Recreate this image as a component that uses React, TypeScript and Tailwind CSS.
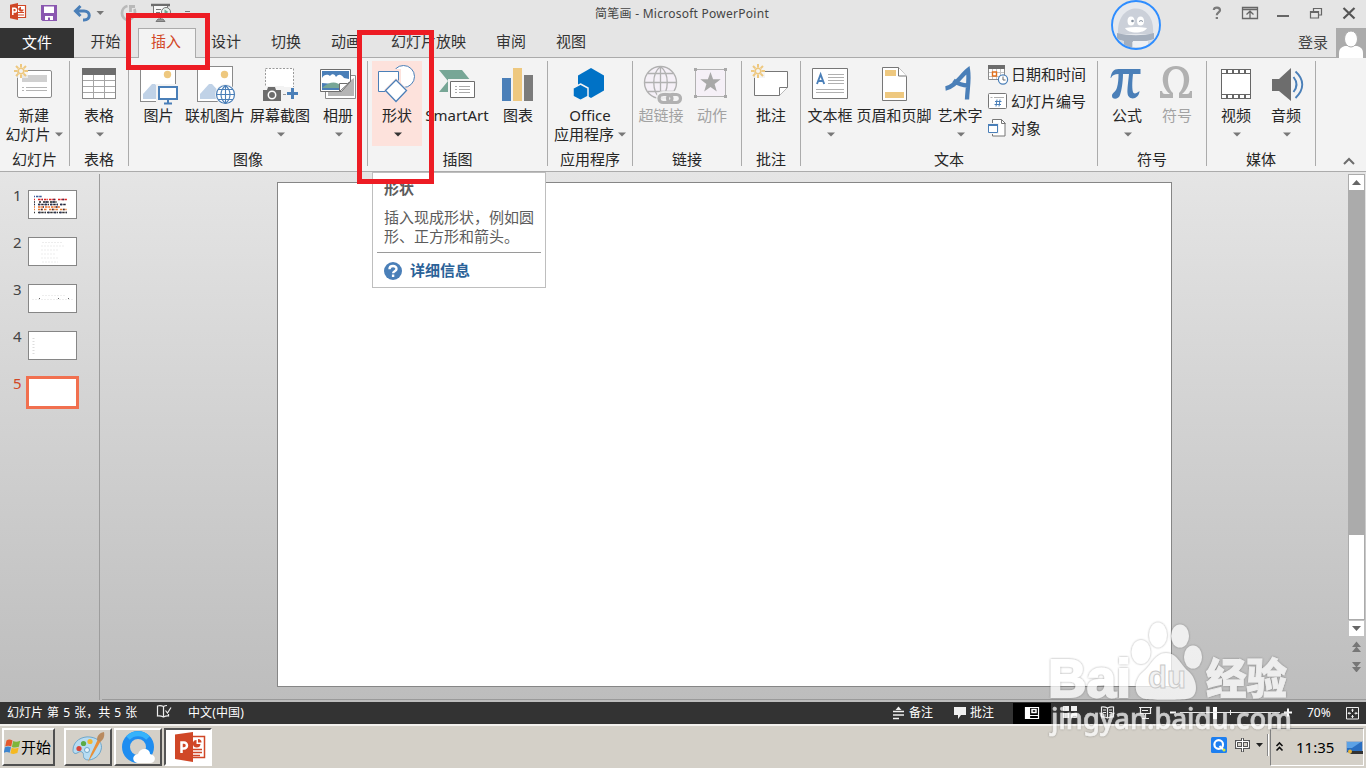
import React from "react";

/* ---------- shared pieces ---------- */

function Art({ x, w, children }: { x: number; w: number; children: React.ReactNode }) {
  return (
    <svg width={w} height={44} viewBox={`${x} 62 ${w} 44`} className="block shrink-0">
      {children}
    </svg>
  );
}

function Caret({ className = "" }: { className?: string }) {
  return (
    <svg width="8" height="5" viewBox="0 0 8 5" className={className}>
      <path d="M0 0.5h8L4 4.5z" fill="currentColor" />
    </svg>
  );
}

type ButtonProps = {
  x: number;
  w: number;
  label: string;
  width: string;
  second?: string;
  caret?: boolean;
  disabled?: boolean;
  active?: boolean;
  children: React.ReactNode;
};

function RibbonButton({ x, w, label, width, second, caret, disabled, active, children }: ButtonProps) {
  return (
    <div
      className={`${width} flex h-[85px] shrink-0 flex-col items-center ${active ? "bg-[#fde2dc]" : ""} ${
        disabled ? "text-[#a2a2a2]" : "text-[#262626]"
      }`}
    >
      <div className="pt-px">
        <Art x={x} w={w}>
          {children}
        </Art>
      </div>
      <div className="h-[19px] text-[15px] leading-[19px]">{label}</div>
      <div className={`flex h-[19px] items-center gap-[4px] text-[15px] leading-[19px] ${second ? "" : "pl-[2px]"}`}>
        {second && <span>{second}</span>}
        {(caret || second) && <Caret className={active ? "text-[#333]" : "text-[#777]"} />}
      </div>
    </div>
  );
}

function Group({ width, name, pad = "", children }: { width: string; name: string; pad?: string; children: React.ReactNode }) {
  return (
    <div className={`${width} flex h-[105px] shrink-0 flex-col border-r border-[#ababab]`}>
      <div className={`flex h-[85px] ${pad}`}>{children}</div>
      <div className="mt-[3px] text-center text-[15px] leading-[20px] text-[#262626]">{name}</div>
    </div>
  );
}

function Spark({ x, y }: { x: number; y: number }) {
  return (
    <g stroke="#eec87f" strokeWidth="2" fill="none">
      <circle cx={x} cy={y} r="2.8" strokeWidth="1.6" fill="#f3f3f3" />
      <path
        d={`M${x} ${y - 7}v3.4M${x} ${y + 3.6}v3.4M${x - 7} ${y}h3.4M${x + 3.6} ${y}h3.4M${x - 5} ${y - 5}l2.3 2.3M${x + 5} ${
          y - 5
        }l-2.3 2.3M${x - 5} ${y + 5}l2.3 -2.3M${x + 5} ${y + 5}l-2.3 -2.3`}
      />
    </g>
  );
}

function Photo({ x }: { x: number }) {
  return (
    <g>
      <rect x={x + 0.5} y="66.5" width="35" height="35" fill="#fff" stroke="#8a8a8a" />
      <circle cx={x + 27.5} cy="74.5" r="3.7" fill="#eec87f" />
      <path d={`M${x + 3} 99v-5l9-10h3l12 13v2z`} fill="#c0d2e7" />
    </g>
  );
}

/* ---------- title bar and tabs ---------- */

function TitleBar() {
  return (
    <div className="flex h-[28px] items-start">
      <svg width="200" height="28" viewBox="0 0 200 28" className="shrink-0">
        <path d="M17 5.500h8.500v12h-8.500" fill="#fff" stroke="#d04727" strokeWidth="1.200" />
        <path d="M18 12.500h6M18 15h6M18 9h2" stroke="#d04727" strokeWidth="1.200" />
        <path d="M21 6.800a2.500 2.500 0 1 0 2.800 2.800h-2.800z" fill="#d04727" />
        <path d="M10 4.800l8-1.800v17l-8-1.800z" fill="#d04727" />
        <path d="M12.800 15V8.300h1.800a1.800 1.800 0 0 1 0 3.700h-1.800" stroke="#fff" strokeWidth="1.500" fill="none" />
        <path d="M41 5h16v16h-14.500l-1.500-1.500z" fill="#8a57b0" />
        <path d="M44 6.500h10v6.500h-10z" fill="#fff" />
        <path d="M45 16h8v4h-3v-2.500h-2v2.500h-3z" fill="#fff" />
        <path d="M80.500 6L75.500 11l5 5M75.500 11h8.500c7 0 7 9 0 9h-1" fill="none" stroke="#4a7fb8" strokeWidth="3" />
        <path d="M96.500 11h7.500l-3.750 4z" fill="#777" />
        <path d="M127.500 6a7 7 0 0 0-5.500 7 6.500 6.500 0 0 0 7 7M129 6.500h6M130.500 6v6M134.500 9c1.500 4-.5 9-5.500 11" fill="none" stroke="#b9b9b9" strokeWidth="2.800" />
        <path d="M151 5h19" stroke="#6d6d6d" strokeWidth="2.500" />
        <path d="M153.500 6v10.500h14V6" fill="#f7f7f7" stroke="#777" />
        <path d="M156 9.500h5M156 12.500h4M160.500 16v3M156 21.500h9l-2-2.500h-5z" stroke="#777" fill="#999" />
        <circle cx="166" cy="12" r="4.500" fill="#e8f1ed" stroke="#777" />
        <path d="M164.500 9.500l4 2.500-4 2.500z" fill="#6fa58f" />
        <path d="M185 11.500h5" stroke="#777" />
      </svg>
      <div className="w-[964px] text-center text-[12px] leading-[27px] tracking-[0.260px] text-[#444]">
        简笔画 - Microsoft PowerPoint
      </div>
      <svg width="202" height="28" viewBox="1164 0 202 28" className="shrink-0">
        <path d="M1213.800 10c.3-3.300 6.200-3.300 6.200.2 0 2.300-3.200 2.100-3.200 5M1215.700 18h2.300" fill="none" stroke="#7a7a7a" strokeWidth="2.200" />
        <path d="M1242.500 7.500h15v11h-15zM1242.500 9.500h15M1250 18v-6M1246.500 14.500l3.500-3.300 3.500 3.300" fill="none" stroke="#666" strokeWidth="1.300" />
        <path d="M1277 16h12" stroke="#666" strokeWidth="2" />
        <path d="M1313.500 12V8.500h8v6.500h-3M1310.500 11.500h8v6.500h-8zM1310.500 12.500h8M1313.500 8.500h8" fill="none" stroke="#666" strokeWidth="1.200" />
        <path d="M1343.500 8l11 10.500M1354.500 8l-11 10.500" stroke="#555" strokeWidth="2.200" />
      </svg>
    </div>
  );
}

const tabs: { name: string; cls: string }[] = [
  { name: "开始", cls: "w-[64px] pr-px" },
  { name: "插入", cls: "w-[58px] border border-b-0 border-[#ababab] bg-[#f3f3f3] pr-[2px] text-[#d24726]" },
  { name: "设计", cls: "w-[60px]" },
  { name: "切换", cls: "w-[60px]" },
  { name: "动画", cls: "w-[60px]" },
  { name: "幻灯片放映", cls: "w-[105px]" },
  { name: "审阅", cls: "w-[60px]" },
  { name: "视图", cls: "w-[60px]" },
];

function TabRow() {
  return (
    <div className="flex h-[30px] text-[15px] leading-[26px] text-[#333]">
      <div className="w-[74px] bg-[#333] text-center leading-[28px] text-white">文件</div>
      {tabs.map((t) => (
        <div
          key={t.name}
          className={`${t.cls} text-center ${t.name === "插入" ? "leading-[25px]" : "border-b border-[#ababab]"}`}
        >
          {t.name}
        </div>
      ))}
      <div className="flex flex-1 justify-end border-b border-[#ababab] pr-[8px] leading-[29px] text-[#444]">登录</div>
      <svg width="30" height="30" viewBox="0 0 30 30" className="shrink-0">
        <rect width="30" height="30" fill="#ababab" />
        <path d="M3 30v-5c0-5 4-7 7-7h10c3 0 7 2 7 7v5z" fill="#fff" />
        <ellipse cx="15" cy="11" rx="6.500" ry="8" fill="#fff" stroke="#ababab" />
      </svg>
    </div>
  );
}

/* ---------- ribbon ---------- */

function SmallRow({ label, children }: { label: string; children: React.ReactNode }) {
  return (
    <div className="flex h-[27px] items-center gap-[2px] text-[15px] leading-[27px] text-[#262626]">
      <svg width="21" height="22" viewBox="0 0 21 22" className="shrink-0">
        {children}
      </svg>
      {label}
    </div>
  );
}

function Ribbon() {
  return (
    <div className="flex h-[114px] border-b border-[#ababab] bg-[#f3f3f3] pt-[3px]">
      <Group width="w-[70px]" name="幻灯片">
        <RibbonButton x={0} w={68} width="w-[68px]" label="新建" second="幻灯片">
          <rect x="17.500" y="70.500" width="34" height="27" rx="1.500" fill="#fff" stroke="#8a8a8a" />
          <path d="M22 75h25v7h-25z" fill="#d0d0d0" />
          <path d="M26 87.500h21M26 90.500h21M22 87.500h2M22 90.500h2" stroke="#b5b5b5" />
          <path d="M14 64h14v14h-14z" fill="#f3f3f3" opacity=".7" />
          <Spark x={21} y={71} />
        </RibbonButton>
      </Group>
      <Group width="w-[59px]" name="表格">
        <RibbonButton x={70} w={58} width="w-[58px]" label="表格" caret>
          <rect x="82.500" y="68.500" width="33" height="30" fill="#fff" stroke="#8a8a8a" />
          <path d="M82 68h34v7h-34z" fill="#6d6d6d" />
          <path d="M83 80.500h32M83 86.500h32M83 92.500h32M93.500 75v23M104.500 75v23" stroke="#a5a5a5" />
        </RibbonButton>
      </Group>
      <Group width="w-[239px]" name="图像" pad="pl-[4px]">
        <RibbonButton x={133} w={51} width="w-[51px]" label="图片">
          <Photo x={140} />
          <path d="M156 84h24v18h-24z" fill="#f3f3f3" />
          <path d="M159 87h18v12h-18z" fill="#fff" stroke="#4a7fb8" strokeWidth="2" />
          <path d="M168 100v3M164 103.500h8" stroke="#4a7fb8" strokeWidth="2" />
        </RibbonButton>
        <RibbonButton x={184} w={62} width="w-[62px]" label="联机图片">
          <Photo x={197} />
          <circle cx="225.500" cy="94.500" r="10.500" fill="#f3f3f3" />
          <circle cx="225.500" cy="94.500" r="9" fill="#fff" stroke="#4a7fb8" strokeWidth="1.200" />
          <path d="M225.500 85.500v18M216.500 94.500h18M218 89.500h15M218 99.500h15M225.500 85.500c-6 5-6 13 0 18M225.500 85.500c6 5 6 13 0 18" fill="none" stroke="#4a7fb8" strokeWidth="1.100" />
        </RibbonButton>
        <RibbonButton x={246} w={68} width="w-[68px]" label="屏幕截图" caret>
          <rect x="265.500" y="68.500" width="28" height="26" fill="#fff" stroke="#999" strokeDasharray="2 1.500" />
          <path d="M262 86h22v17h-22z" fill="#f3f3f3" />
          <path d="M263 90h4l1-3h7l1 3h5v11h-18z" fill="#6d6d6d" />
          <circle cx="272" cy="95" r="3.700" fill="#6d6d6d" stroke="#fff" strokeWidth="1.500" />
          <path d="M284 87h15v14h-15z" fill="#f3f3f3" />
          <path d="M283 94.500h3" stroke="#999" />
          <path d="M292.500 88v11M287 93.500h11" stroke="#4a7fb8" strokeWidth="3" />
        </RibbonButton>
        <RibbonButton x={314} w={48} width="w-[48px]" label="相册" caret>
          <path d="M325.500 75.500h30v23h-30z" fill="#fff" stroke="#8a8a8a" />
          <path d="M328 92l9-7 6 4 8-9 3-2v18h-26z" fill="#b5b5b5" />
          <path d="M320.500 69.500h30v12l-9 10h-21z" fill="#fff" stroke="#6d6d6d" />
          <path d="M322 71h27v10l-8 9h-19z" fill="#4a7fb8" />
          <path d="M322 83v-5c2-4 6-4 8-2 2-3 5-2 6 1 3-4 6-2 8 1l5 1v3l-4 3z" fill="#fff" />
          <path d="M322 88c8-7 14-7 20-2l-1 2z" fill="#77a696" />
          <path d="M339.500 91.500v-8h8l3-2z" fill="#fff" stroke="#6d6d6d" />
        </RibbonButton>
      </Group>
      <Group width="w-[180px]" name="插图" pad="pl-[4px]">
        <RibbonButton x={372} w={50} width="w-[50px]" label="形状" caret active>
          <circle cx="403.500" cy="76.500" r="11" fill="#fff" stroke="#4a7fb8" />
          <path d="M376 69h25v26h-25z" fill="#fde2dc" />
          <path d="M378.500 71.500h20v20h-20z" fill="#fff" stroke="#4a7fb8" />
          <path d="M396 78l12 12-12 13-12-13z" fill="#fde2dc" />
          <path d="M396 80l10.500 10.500-10.500 11-10.500-11z" fill="#fff" stroke="#4a7fb8" strokeWidth="1.300" />
        </RibbonButton>
        <RibbonButton x={422} w={70} width="w-[70px]" label="SmartArt">
          <path d="M439 70h23l9 11-9 11h-23l9-11z" fill="#77a696" />
          <path d="M448 79h29v21h-29z" fill="#f3f3f3" />
          <path d="M450.500 81.500h24v16h-24z" fill="#fff" stroke="#6d6d6d" />
          <path d="M455 86.500h2M455 89.500h2M455 92.500h2M459 86.500h11M459 89.500h11M459 92.500h11" stroke="#aaa" />
        </RibbonButton>
        <RibbonButton x={492} w={52} width="w-[52px]" label="图表">
          <path d="M502 78h9v23h-9z" fill="#4a7fb8" />
          <path d="M513 68h9v33h-9z" fill="#eec87f" />
          <path d="M524 75h9v26h-9z" fill="#7b7b7b" />
        </RibbonButton>
      </Group>
      <Group width="w-[85px]" name="应用程序">
        <RibbonButton x={548} w={84} width="w-[84px]" label="Office" second="应用程序">
          <path d="M591 68l13 7.500v15l-13 7.500-13-7.500v-15z" fill="#0072c6" />
          <path d="M580.500 84l7.500 4v8.500l-7.500 4-7.500-4v-8.500z" fill="#0072c6" stroke="#f3f3f3" strokeWidth="1.500" />
        </RibbonButton>
      </Group>
      <Group width="w-[109px]" name="链接" pad="pl-[3px]">
        <RibbonButton x={636} w={50} width="w-[50px]" label="超链接" disabled>
          <circle cx="660.500" cy="82.500" r="16" fill="#f5f0f7" stroke="#b1b1b1" strokeWidth="1.400" />
          <path d="M660.500 66.500v32M644.500 82.500h32M648 73.500h25M648 91.500h25M660.500 66.500c-9 7-9 25 0 32M660.500 66.500c9 7 9 25 0 32" fill="none" stroke="#b1b1b1" strokeWidth="1.300" />
          <rect x="656" y="91" width="27" height="14" rx="7" fill="#f3f3f3" opacity=".85" />
          <rect x="659" y="94.500" width="13" height="8" rx="4" fill="none" stroke="#b1b1b1" strokeWidth="3.200" />
          <rect x="667.500" y="94.500" width="13" height="8" rx="4" fill="none" stroke="#b1b1b1" strokeWidth="3.200" />
        </RibbonButton>
        <RibbonButton x={686} w={52} width="w-[52px]" label="动作" disabled>
          <path d="M695.500 69.500h30v27h-30z" fill="#f5f0f7" stroke="#b1b1b1" />
          <path d="M694 68h3v3h-3zM724 68h3v3h-3zM694 95h3v3h-3zM724 95h3v3h-3z" fill="#a8a8a8" />
          <path d="M710.500 72l2.600 7.300h7.600l-6.100 4.700 2.200 7.600-6.300-4.500-6.300 4.500 2.200-7.600-6.100-4.700h7.600z" fill="#a8a8a8" />
        </RibbonButton>
      </Group>
      <Group width="w-[59px]" name="批注">
        <RibbonButton x={742} w={58} width="w-[58px]" label="批注">
          <path d="M754.500 71.500h33v16l-8 8h-25z" fill="#fff" stroke="#777" />
          <path d="M779.500 95.500v-8h8" fill="#fff" stroke="#777" />
          <path d="M751 64h14v14h-14z" fill="#f3f3f3" opacity=".8" />
          <Spark x={758} y={71} />
        </RibbonButton>
      </Group>
      <Group width="w-[297px]" name="文本" pad="pl-[4px]">
        <RibbonButton x={805} w={50} width="w-[50px]" label="文本框" caret>
          <path d="M812.500 68.500h35v30h-35z" fill="#fff" stroke="#777" />
          <path d="M828 74.500h16M828 77.500h16M828 80.500h16M828 83.500h16M816 89.500h28M816 92.500h28" stroke="#b0b0b0" strokeWidth="1" />
          <path d="M817 84l3.600-9.500 3.600 9.500M818.500 81h4.500" fill="none" stroke="#4a7fb8" strokeWidth="1.900" />
        </RibbonButton>
        <RibbonButton x={855} w={78} width="w-[78px]" label="页眉和页脚">
          <path d="M882.500 67.500h16l8 9v24h-24z" fill="#fff" stroke="#777" />
          <path d="M898.500 67.500v8.500h8" fill="#fff" stroke="#777" />
          <path d="M885 70h11v6h-11zM885 92h19v6h-19z" fill="#eec87f" />
        </RibbonButton>
        <RibbonButton x={933} w={54} width="w-[54px]" label="艺术字" caret>
          <path d="M945.500 88.500c9-1 15-12.500 22.500-18.500 1.500 9-.5 18-1 29.500M953.500 80.500c5 3.500 8 5 14 5" fill="none" stroke="#4a7fb8" strokeWidth="4.300" />
        </RibbonButton>
        <div className="flex shrink-0 flex-col pl-px">
          <SmallRow label="日期和时间">
            <path d="M.5 1.500h16v14h-16z" fill="#fff" stroke="#8a8a8a" />
            <path d="M0 1h17v4h-17z" fill="#6d6d6d" />
            <path d="M4.500 5v10M8.500 5v10M12.500 5v10M1 8.500h15M1 12.500h15" stroke="#c5c5c5" />
            <path d="M4.500 8h4v4h-4z" fill="#fff" stroke="#e0701c" strokeWidth="1.400" />
            <circle cx="15" cy="15.500" r="4.600" fill="#fff" stroke="#4a7fb8" strokeWidth="1.200" />
            <path d="M15 12.500v3.500h2.500" fill="none" stroke="#666" />
          </SmallRow>
          <SmallRow label="幻灯片编号">
            <rect x=".5" y="2.500" width="18" height="15" rx="1" fill="#fff" stroke="#777" />
            <path d="M2.500 6.500h2M6 6.500h10" stroke="#b0b0b0" />
            <path d="M9 8.500l-1 7M12 8.500l-1 7M7 10.500h6.500M6.500 13.500h6.500" stroke="#4a7fb8" />
          </SmallRow>
          <SmallRow label="对象">
            <path d="M4.500 1.500h9l3.500 3.500v13h-12.500z" fill="#fff" stroke="#777" />
            <path d="M13.500 1.500v4h4" fill="none" stroke="#777" />
            <path d="M0 5h11v11h-11z" fill="#f3f3f3" />
            <path d="M.5 6.500h9v8h-9z" fill="#fff" stroke="#4a7fb8" />
            <path d="M0 7h10" stroke="#4a7fb8" strokeWidth="2" />
          </SmallRow>
        </div>
      </Group>
      <Group width="w-[109px]" name="符号" pad="pl-[4px]">
        <RibbonButton x={1102} w={50} width="w-[50px]" label="公式" caret>
          <path d="M1110.500 78c1-6 3-9 8-9h22v5h-7.500c-1 9-1 15 0 18 1 2.500 3.500 1.500 6.500-1-.5 9-11.500 10-12 2-.3-4 .7-11 1.500-19h-6c0 8-1.500 17-3 21-1.500 5-8.500 5-8 .5.300-3 3.500-3 5-8 1.300-4.500 1.500-9 1.500-13.500-4 0-6 1-7.500 4z" fill="#4a7fb8" />
        </RibbonButton>
        <RibbonButton x={1152} w={50} width="w-[50px]" label="符号" disabled>
          <path d="M1160 98v-7h2c.5 2 1 3 3 3h5c-10-7-11-28 6-28s16 21 6 28h5c2 0 2.500-1 3-3h2v7h-13v-5c7-6 7-24-3-24s-10 18-3 24v5z" fill="#b1b1b1" />
        </RibbonButton>
      </Group>
      <Group width="w-[109px]" name="媒体" pad="pl-[4px]">
        <RibbonButton x={1211} w={50} width="w-[50px]" label="视频" caret>
          <path d="M1221 69h30v30h-30z" fill="#666" />
          <path d="M1222 74h28v20h-28z" fill="#fff" />
          <path d="M1222 71.500h28M1222 96.500h28" stroke="#fff" strokeWidth="3" strokeDasharray="4 2" />
        </RibbonButton>
        <RibbonButton x={1261} w={50} width="w-[50px]" label="音频" caret>
          <path d="M1272 79h7l12-11v33l-12-10h-7z" fill="#6d6d6d" />
          <path d="M1293.500 77c4 5 4 10 0 15M1295.500 71.500c9 8 9 18 0 26.500" fill="none" stroke="#4a7fb8" strokeWidth="1.900" />
        </RibbonButton>
      </Group>
      <div className="flex flex-1 items-end justify-end pr-[11px] pb-[6px]">
        <svg width="12" height="8" viewBox="0 0 12 8">
          <path d="M1 7l5-5 5 5" fill="none" stroke="#6d6d6d" strokeWidth="2" />
        </svg>
      </div>
    </div>
  );
}

/* ---------- work area ---------- */

const thumbLines = [
  "M5 5.500h1M7 5.500h6",
  "M5 8.500h1M9 8.500h5M15 8.500h4M20 8.500h7M29 8.500h9",
  "M5 11h1M10 11h2M14 11h6M21 11h7",
  "M5 13.500h1M9 13.500h11M21 13.500h8M31 13.500h6",
  "M5 16h1M9 16h6M16 16h5M22 16h9",
  "M5 18.500h1M9 18.500h5M15 18.500h3M20 18.500h9M31 18.500h7",
  "M5 21.500h1M9 21.500h8M18 21.500h11M30 21.500h8",
];
const thumbColors = ["#3b5c9c", "#d22", "#222", "#223", "#e86b28", "#e57a30", "#333"];

function ThumbArt({ n }: { n: number }) {
  return (
    <svg width="47" height="27" viewBox="0 0 47 27">
      {n === 1 &&
        thumbLines.map((d, i) => (
          <g key={d}>
            <path d={d} stroke={thumbColors[i]} strokeWidth="1.600" strokeDasharray="2.500 .7" />
            {i > 0 && <path d={d} stroke="#29355a" strokeWidth="1.500" strokeDasharray="1.500 5" strokeDashoffset={i * 2} />}
          </g>
        ))}
      {n === 2 && <path d="M13 4.500h20M12 8h23M12 12h17M12 16h15M12 20h17M13 24h16" stroke="#ededed" strokeDasharray="2 1" />}
      {n === 3 && (
        <g>
          <path d="M3 14.500h42M13 10.500h23" stroke="#eee" strokeDasharray="2 1" />
          <path d="M10 13.500h1M29 13.500h1M39 13.500h1" stroke="#666" />
        </g>
      )}
      {n === 4 && <path d="M4.500 6v18" stroke="#ddd" strokeWidth="2" strokeDasharray="1 2" />}
    </svg>
  );
}

function Thumbnails() {
  return (
    <div className="mt-[2px] flex h-[526px] w-[100px] shrink-0 flex-col border-r border-[#9d9d9d] pt-[13px]">
      {[1, 2, 3, 4, 5].map((n) => (
        <div key={n} className="flex h-[47px] items-start">
          <div className={`w-[28px] pl-[13px] text-[15px] leading-[17px] ${n === 5 ? "text-[#d24726]" : "text-[#444]"}`}>{n}</div>
          {n === 5 ? (
            <div className="mt-px -ml-[2px] h-[33px] w-[53px] border-[3px] border-[#f1704f] bg-white" />
          ) : (
            <div className="mt-[3px] h-[29px] w-[49px] border border-[#868686] bg-white">
              <ThumbArt n={n} />
            </div>
          )}
        </div>
      ))}
    </div>
  );
}

function ScrollBar() {
  return (
    <div className="flex w-[18px] shrink-0 flex-col pt-[2px]">
      <div className="flex h-[17px] w-[17px] items-center justify-center border border-[#ababab] bg-white">
        <svg width="9" height="5" viewBox="0 0 9 5"><path d="M0 5h9L4.500 0z" fill="#666" /></svg>
      </div>
      <div className="h-[344px] w-[17px] bg-[#ababab]" />
      <div className="h-[85px] w-[17px] border border-t-0 border-[#ababab] bg-white" />
      <div className="mt-px ml-px flex h-[15px] w-[15px] items-center justify-center bg-white">
        <svg width="9" height="5" viewBox="0 0 9 5"><path d="M0 0h9L4.500 5z" fill="#666" /></svg>
      </div>
      <svg width="17" height="36" viewBox="0 0 17 36">
        <path d="M4 11h9L8.500 5.500zM4 16h9L8.500 10.500zM4 26h9L8.500 31.500zM4 31h9L8.500 36.500z" fill="#777" />
      </svg>
    </div>
  );
}

function Workspace() {
  return (
    <div className="flex h-[530px] bg-linear-to-b from-[#e5e5e5] to-[#bdbdbd]">
      <Thumbnails />
      <div className="ml-[2px] flex h-[528px] flex-1 border-b border-[#9a9a9a]">
        <div className="mt-[10px] ml-[175px] h-[505px] w-[895px] border border-[#868686] bg-white" />
        <div className="flex-1" />
        <ScrollBar />
      </div>
    </div>
  );
}

/* ---------- status bar and taskbar ---------- */

function StatusBar() {
  return (
    <div className="flex h-[22px] items-center bg-[#333] text-[12px] leading-[22px] text-white">
      <div className="w-[150px] pl-[7px] [word-spacing:1px]">幻灯片 第 5 张，共 5 张</div>
      <svg width="38" height="22" viewBox="150 702 38 22" className="shrink-0">
        <path d="M163.500 706.500c-2-1-4-1-6-.5v10c2-.5 4 0 6 1 2-1 3-1.300 5-1v-2M163.500 706.500v11M163.500 706.500c1-.7 2-1 3.500-1M165.500 710.500l2 2.500 3.500-5.500" fill="none" stroke="#eee" strokeWidth="1.200" />
      </svg>
      <div className="w-[704px] tracking-[0.120px]">中文(中国)</div>
      <svg width="17" height="22" viewBox="892 702 17 22" className="shrink-0">
        <path d="M893 711.500h11M893 715h11M893 718.500h6" stroke="#f0f0f0" strokeWidth="1.300" />
        <path d="M895.500 710h6l-3-3.500z" fill="#f0f0f0" />
      </svg>
      <div className="w-[45px]">备注</div>
      <svg width="16" height="22" viewBox="954 702 16 22" className="shrink-0">
        <path d="M954 707h12v8h-5l-3 4v-4h-4z" fill="#f0f0f0" />
      </svg>
      <div className="w-[43px]">批注</div>
      <svg width="293" height="22" viewBox="1013 702 293 22" className="shrink-0">
        <path d="M1013 703h38v21h-38z" fill="#000" />
        <path d="M1025.500 707.500h13v11h-13zM1029.500 707v12M1030 715.500h9" fill="none" stroke="#fff" strokeWidth="1.200" />
        <path d="M1026 708h3v10h-3z" fill="#fff" />
        <path d="M1032 709.500h4v3h-4z" fill="none" stroke="#fff" strokeWidth="1.500" />
        <path d="M1063 706h6v5h-6zM1071 706h6v5h-6zM1063 713h6v5h-6zM1071 713h6v5h-6z" fill="#f0f0f0" />
        <path d="M1107.500 708v10.500M1107.500 708c-2-1-4-1.500-6-1v10c2-.5 4 0 6 1 2-1 4-1.500 6-1v-10c-2-.5-4 0-6 1M1103 710h3M1103 712.500h3M1103 715h3M1109 710h3M1109 712.500h3M1109 715h3" fill="none" stroke="#f0f0f0" strokeWidth="1.200" />
        <path d="M1139 707.500h13M1140.500 708v5.500h10v-5.500M1145.500 714v4M1142 718.500h7M1142 710.500h6" fill="none" stroke="#f0f0f0" strokeWidth="1.200" />
        <path d="M1170 712.500h6M1284 712.500h8M1288 708.500v8" stroke="#fff" strokeWidth="2" />
        <path d="M1180 712.500h100M1230.500 710v5" stroke="#eee" />
        <path d="M1213 707h4v12h-4z" fill="#fff" />
      </svg>
      <div className="w-[39px] pl-px">70%</div>
      <svg width="21" height="22" viewBox="1345 702 21 22" className="shrink-0">
        <path d="M1346.500 707.500h12v11.500h-12zM1352.500 709v3M1352.500 715v3M1348 713.300h3M1354.500 713.300h3" fill="none" stroke="#eee" />
        <path d="M1351 710.500l1.500-2 1.500 2zM1351 716l1.500 2 1.500-2zM1349.500 711.800l-2 1.500 2 1.500zM1355.500 711.800l2 1.500-2 1.500z" fill="#eee" />
      </svg>
    </div>
  );
}

function TaskButton({ pressed, children }: { pressed?: boolean; children: React.ReactNode }) {
  return (
    <div
      className={`flex h-[38px] w-[48px] items-center justify-center border-2 ${
        pressed ? "border-t-[#555] border-r-white border-b-white border-l-[#555] bg-white" : "border-t-white border-r-[#505050] border-b-[#505050] border-l-white"
      }`}
    >
      {children}
    </div>
  );
}

function Taskbar() {
  return (
    <div className="flex h-[44px] border-t-2 border-[#f3f1ee] bg-[#d4d0c8] pt-[2px] pl-[2px]">
      <div className="mr-[9px] flex h-[38px] w-[53px] items-center border-2 border-t-white border-r-[#505050] border-b-[#505050] border-l-white">
        <svg width="17" height="18" viewBox="0 0 17 18" className="shrink-0">
          <path d="M2.500 2.500c2-1.500 4-1 6 0l-1.300 6c-2-1-4-1-6 0z" fill="#e4582b" />
          <path d="M9.200 3c2 1 4 1 7-.2l-1.300 6c-2.500 1-5 1-7 .2z" fill="#7eb63a" />
          <path d="M1 9.300c2-1 4-1 6 0l-1.300 5.500c-2-1-4-1-6 0z" fill="#3f86cf" />
          <path d="M7.700 9.800c2 1 4.500 1 7-.2l-1.300 5.500c-2.500 1-5 1-7 .2z" fill="#f5b921" />
        </svg>
        <span className="text-[15px] leading-[20px] whitespace-nowrap text-black">开始</span>
      </div>
      <div className="flex gap-[2px]">
        <TaskButton>
          <svg width="36" height="34" viewBox="0 0 36 34">
            <path d="M3 20C3 11 12 6 20 7c9 1 13 7 11 13-2 8-12 12-16 9-3-2 0-5-3-7s-5 3-8 1c-1-1-1-2-1-3z" fill="#b7dcf2" stroke="#6fa6c9" />
            <circle cx="9" cy="18.500" r="2.600" fill="#d9453a" />
            <circle cx="13.500" cy="13.500" r="2.600" fill="#5cab45" />
            <circle cx="20" cy="11.500" r="2.600" fill="#f2b632" />
            <circle cx="17" cy="20" r="2.500" fill="#e8f4fb" stroke="#6fa6c9" />
            <path d="M18 32l3-8 7-15 3 1.500-8 14z" fill="#e8903a" />
            <path d="M27 10c0-4 2-7 7-8 1 5-1 8-4 10z" fill="#b98a5e" />
          </svg>
        </TaskButton>
        <TaskButton>
          <svg width="36" height="34" viewBox="0 0 36 34">
            <circle cx="18" cy="17" r="12" fill="none" stroke="#1f8df0" strokeWidth="8" />
            <path d="M8 8a14 14 0 0 1 20 0" fill="none" stroke="#36b3fb" strokeWidth="5" />
            <path d="M19 33c-7 0-8-8-1-9 2-7 12-6 12 0 7 1 6 9 0 9z" fill="#fff" />
          </svg>
        </TaskButton>
        <TaskButton pressed>
          <svg width="36" height="34" viewBox="0 0 36 34">
            <path d="M22 6.500h12.500v21h-12.500" fill="#fff" stroke="#d04727" strokeWidth="1.500" />
            <path d="M23 19.500h9M23 22.500h9M23 25.500h7" stroke="#d04727" strokeWidth="1.400" />
            <path d="M26.500 10a3.800 3.800 0 1 0 4 4h-4z" fill="#d04727" />
            <path d="M28 9v3.500h3.500a3.500 3.500 0 0 0-3.500-3.500z" fill="#d04727" />
            <path d="M5 4.500l18-2.500v30l-18-3z" fill="#d04727" />
            <path d="M11.500 23V12.500h2.500a2.900 2.900 0 0 1 0 6h-2.500" stroke="#fff" strokeWidth="2.500" fill="none" />
          </svg>
        </TaskButton>
      </div>
      <div className="flex-1" />
      <svg width="60" height="40" viewBox="1210 728 60 40" className="shrink-0">
        <rect x="1211" y="737" width="16" height="16" rx="1.500" fill="#1e7ff0" />
        <circle cx="1218.700" cy="744.500" r="4.300" fill="none" stroke="#fff" strokeWidth="2.200" />
        <path d="M1219.500 746l3.500 3.500" stroke="#fff" strokeWidth="2" />
        <circle cx="1224" cy="750" r="1.500" fill="#d6e63a" />
        <path d="M1236.500 741.500h12v6h-12zM1242.500 738v14" fill="none" stroke="#555" strokeWidth="3" />
        <path d="M1236.500 741.500h12v6h-12zM1242.500 738.500v13" fill="none" stroke="#fff" strokeWidth="1" />
        <path d="M1256 743h7l-3.500 4z" fill="#222" />
        <path d="M1267.500 734v22" stroke="#888" />
        <path d="M1268.500 734v22" stroke="#fff" />
      </svg>
      <div className="mr-[2px] flex h-[38px] w-[94px] items-center border-t border-r border-b border-l border-t-[#808080] border-r-white border-b-white border-l-[#808080] pt-px">
        <svg width="25" height="20" viewBox="0 0 25 20">
          <path d="M5.500 8l3-3 3 3M5.500 12.500l3-3 3 3" fill="none" stroke="#111" strokeWidth="1.600" />
        </svg>
        <span className="-mt-[2px] w-[50px] text-[15px] leading-[20px] text-black">11:35</span>
        <svg width="17" height="14" viewBox="0 0 17 14">
          <path d="M.5 .5h16v11h-16z" fill="#2a6fc2" stroke="#a7b4c4" />
          <path d="M1 1h14l-9 6h-5z" fill="#5ca2e6" />
          <path d="M1 10h16v3h-12z" fill="#333" />
          <circle cx="4" cy="10.500" r="2" fill="#e5b43a" />
        </svg>
      </div>
    </div>
  );
}

/* ---------- overlays ---------- */

function Tooltip() {
  return (
    <div className="absolute top-[172px] left-[372px] flex h-[116px] w-[174px] flex-col border border-[#bebebe] bg-white pt-[5px] text-[#5c5c5c]">
      <div className="pl-[11px] text-[15px] leading-[20px] font-bold">形状</div>
      <div className="mt-[10px] pl-[11px] text-[15px] leading-[19px] whitespace-nowrap">
        插入现成形状，例如圆
        <br />
        形、正方形和箭头。
      </div>
      <div className="mx-[4px] mt-[6px] border-t border-[#9a9a9a]" />
      <div className="mt-[7px] flex items-center pl-[11px]">
        <svg width="18" height="18" viewBox="0 0 18 18" className="mt-px mr-[8px]">
          <circle cx="9" cy="9" r="9" fill="#4a7fb8" />
          <path d="M5.500 7.200c0-4.300 7-4.100 7-.3 0 2.400-3.400 2.200-3.400 4.300M7.900 13.800h2.400" fill="none" stroke="#fff" strokeWidth="2.400" />
        </svg>
        <span className="text-[15px] leading-[20px] font-bold text-[#2b6298]">详细信息</span>
      </div>
    </div>
  );
}

function Mascot() {
  return (
    <svg width="50" height="50" viewBox="0 0 50 50" className="absolute top-0 left-[1111px]">
      <defs>
        <clipPath id="mascot"><circle cx="25" cy="25" r="23" /></clipPath>
      </defs>
      <circle cx="25" cy="25" r="24" fill="#e6e9ee" />
      <g clipPath="url(#mascot)">
        <path d="M7 34C5 0 45 0 42 34z" fill="#cbd0d9" />
        <path d="M6 33c12 3 26 3 37 0v6c-10 4-28 4-37 0z" fill="#a5afbd" />
        <path d="M8 40c10 3 25 3 34 0v10H8z" fill="#d5dae1" />
        <path d="M13 39h8v10h-8z" fill="#a5afbd" />
        <path d="M22 41h15v6h-15z" fill="#eef0f4" />
        <ellipse cx="20" cy="21" rx="3.500" ry="4.500" fill="#fff" />
        <ellipse cx="29.500" cy="21" rx="3.500" ry="4.500" fill="#fff" />
        <circle cx="21.500" cy="21" r="1.300" fill="#8590a0" />
        <path d="M28 21.500q2-2 4 0" fill="none" stroke="#8590a0" />
        <path d="M14 28c7-1.500 15-1.500 22 0-3 6-19 6-22 0z" fill="#fff" />
      </g>
      <circle cx="25" cy="25" r="24" fill="none" stroke="#2e8dff" strokeWidth="1.900" />
    </svg>
  );
}

function Watermark() {
  return (
    <svg width="260" height="130" viewBox="1040 612 260 130" className="absolute top-[612px] left-[1040px]">
      <defs>
        <filter id="soft" x="-10%" y="-10%" width="120%" height="120%">
          <feDropShadow dx="0" dy="0" stdDeviation="1.100" floodColor="#555" floodOpacity=".75" />
        </filter>
      </defs>
      <g fill="#fff" opacity=".74" filter="url(#soft)">
        <text x="1048" y="697" fontSize="54" fontWeight="700" fontFamily="Liberation Sans" textLength="83" lengthAdjust="spacingAndGlyphs" stroke="#fff" strokeWidth="1.800">Bai</text>
        <ellipse cx="1141" cy="652" rx="9.500" ry="12" />
        <ellipse cx="1158" cy="635" rx="9" ry="12.500" />
        <ellipse cx="1180" cy="636" rx="9" ry="11.500" />
        <ellipse cx="1193" cy="657" rx="9" ry="11.500" />
        <path d="M1166 653c11 0 14 11 22 18 9 7 13 27-2 28-9 1-31 1-40 0-14-2-12-20-3-27 8-6 12-19 23-19z" />
        <text x="1206" y="694" fontSize="42" fontWeight="900" fontFamily="Noto Sans CJK SC" textLength="81" lengthAdjust="spacingAndGlyphs" stroke="#fff" strokeWidth=".800">经验</text>
        <text x="1051" y="729" fontSize="29" fontWeight="500" fontFamily="Noto Sans" textLength="241" lengthAdjust="spacingAndGlyphs" stroke="#fff" strokeWidth=".600">jingyan.baidu.com</text>
      </g>
      <text x="1148" y="688" fontSize="31" fontWeight="700" fontFamily="Liberation Sans" fill="#f3f3f3" stroke="#c9c9c9" textLength="38" lengthAdjust="spacingAndGlyphs">du</text>
    </svg>
  );
}

export default function App() {
  return (
    <div className="relative h-[768px] w-[1366px] overflow-hidden bg-[#e5e5e5] font-['Noto_Sans','Noto_Sans_CJK_SC',sans-serif] whitespace-nowrap">
      <TitleBar />
      <TabRow />
      <Ribbon />
      <Workspace />
      <StatusBar />
      <Taskbar />
      <Tooltip />
      <Mascot />
      <Watermark />
      <div className="absolute top-[13px] left-[126px] h-[57px] w-[84px] border-[5px] border-[#ed1c24]" />
      <div className="absolute top-[30px] left-[357px] h-[154px] w-[77px] border-[5px] border-[#ed1c24]" />
    </div>
  );
}
